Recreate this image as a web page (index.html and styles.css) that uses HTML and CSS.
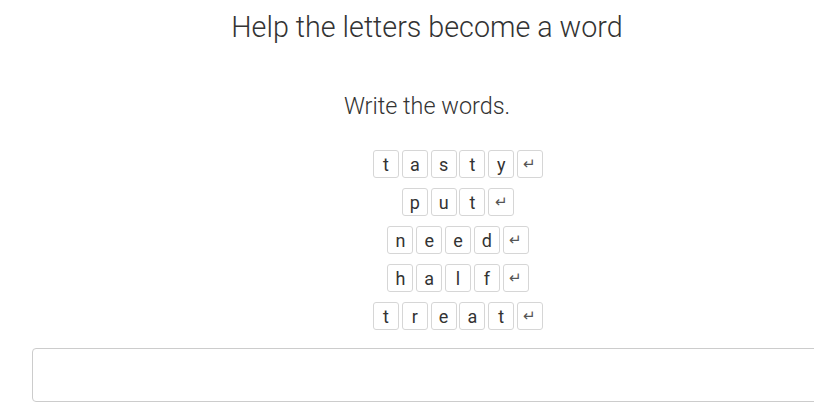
FILE: index.html
```html
<!DOCTYPE html>
<html lang="en">
<head>
  <meta charset="UTF-8">
  <meta name="viewport" content="width=device-width, initial-scale=1.0">
  <title>Help the letters become a word</title>
  <link rel="stylesheet" href="styles.css">
</head>
<body>

  <div class="page">
    <h1 class="title">Help the letters become a word</h1>
    <p class="task">Write the words.</p>

    <div class="words">
      <div class="word">
        <span class="key">t</span><span class="key">a</span><span class="key">s</span><span class="key">t</span><span class="key">y</span><span class="key enter">&#8629;</span>
      </div>
      <div class="word">
        <span class="key">p</span><span class="key">u</span><span class="key">t</span><span class="key enter">&#8629;</span>
      </div>
      <div class="word">
        <span class="key">n</span><span class="key">e</span><span class="key">e</span><span class="key">d</span><span class="key enter">&#8629;</span>
      </div>
      <div class="word">
        <span class="key">h</span><span class="key">a</span><span class="key">l</span><span class="key">f</span><span class="key enter">&#8629;</span>
      </div>
      <div class="word">
        <span class="key">t</span><span class="key">r</span><span class="key">e</span><span class="key">a</span><span class="key">t</span><span class="key enter">&#8629;</span>
      </div>
    </div>

    <input class="answer" type="text">
  </div>

</body>
</html>
```

FILE: styles.css
```css
html {
  overflow: hidden;
}

body {
  font-family: 'Roboto', 'Liberation Sans', sans-serif;
  background: #fff;
  color: #333;
  margin: 0;
}

.page {
  width: 790px;
  margin-left: 32px;
}

.title {
  margin: 9px 0 0;
  font-size: 28.7px;
  line-height: 36px;
  font-weight: 300;
  text-align: center;
}

.task {
  margin: 47px 0 0;
  font-size: 23.4px;
  line-height: 28px;
  font-weight: 300;
  text-align: center;
}

.words {
  margin-top: 30px;
  padding-left: 62px;
  display: flex;
  flex-direction: column;
  align-items: center;
  gap: 10px;
}

.word {
  display: flex;
  gap: 2.8px;
}

.key {
  box-sizing: border-box;
  width: 26px;
  height: 28px;
  display: flex;
  justify-content: center;
  align-items: center;
  border: 1px solid #d6d6d6;
  border-radius: 3px;
  font-size: 18px;
  color: #333;
}

.enter {
  font-size: 15px;
  color: #555;
}

.answer {
  display: block;
  box-sizing: border-box;
  width: 790px;
  height: 54px;
  margin-top: 18px;
  border: 1px solid #ccc;
  border-radius: 4px;
  font-family: inherit;
  font-size: 16px;
}
```
